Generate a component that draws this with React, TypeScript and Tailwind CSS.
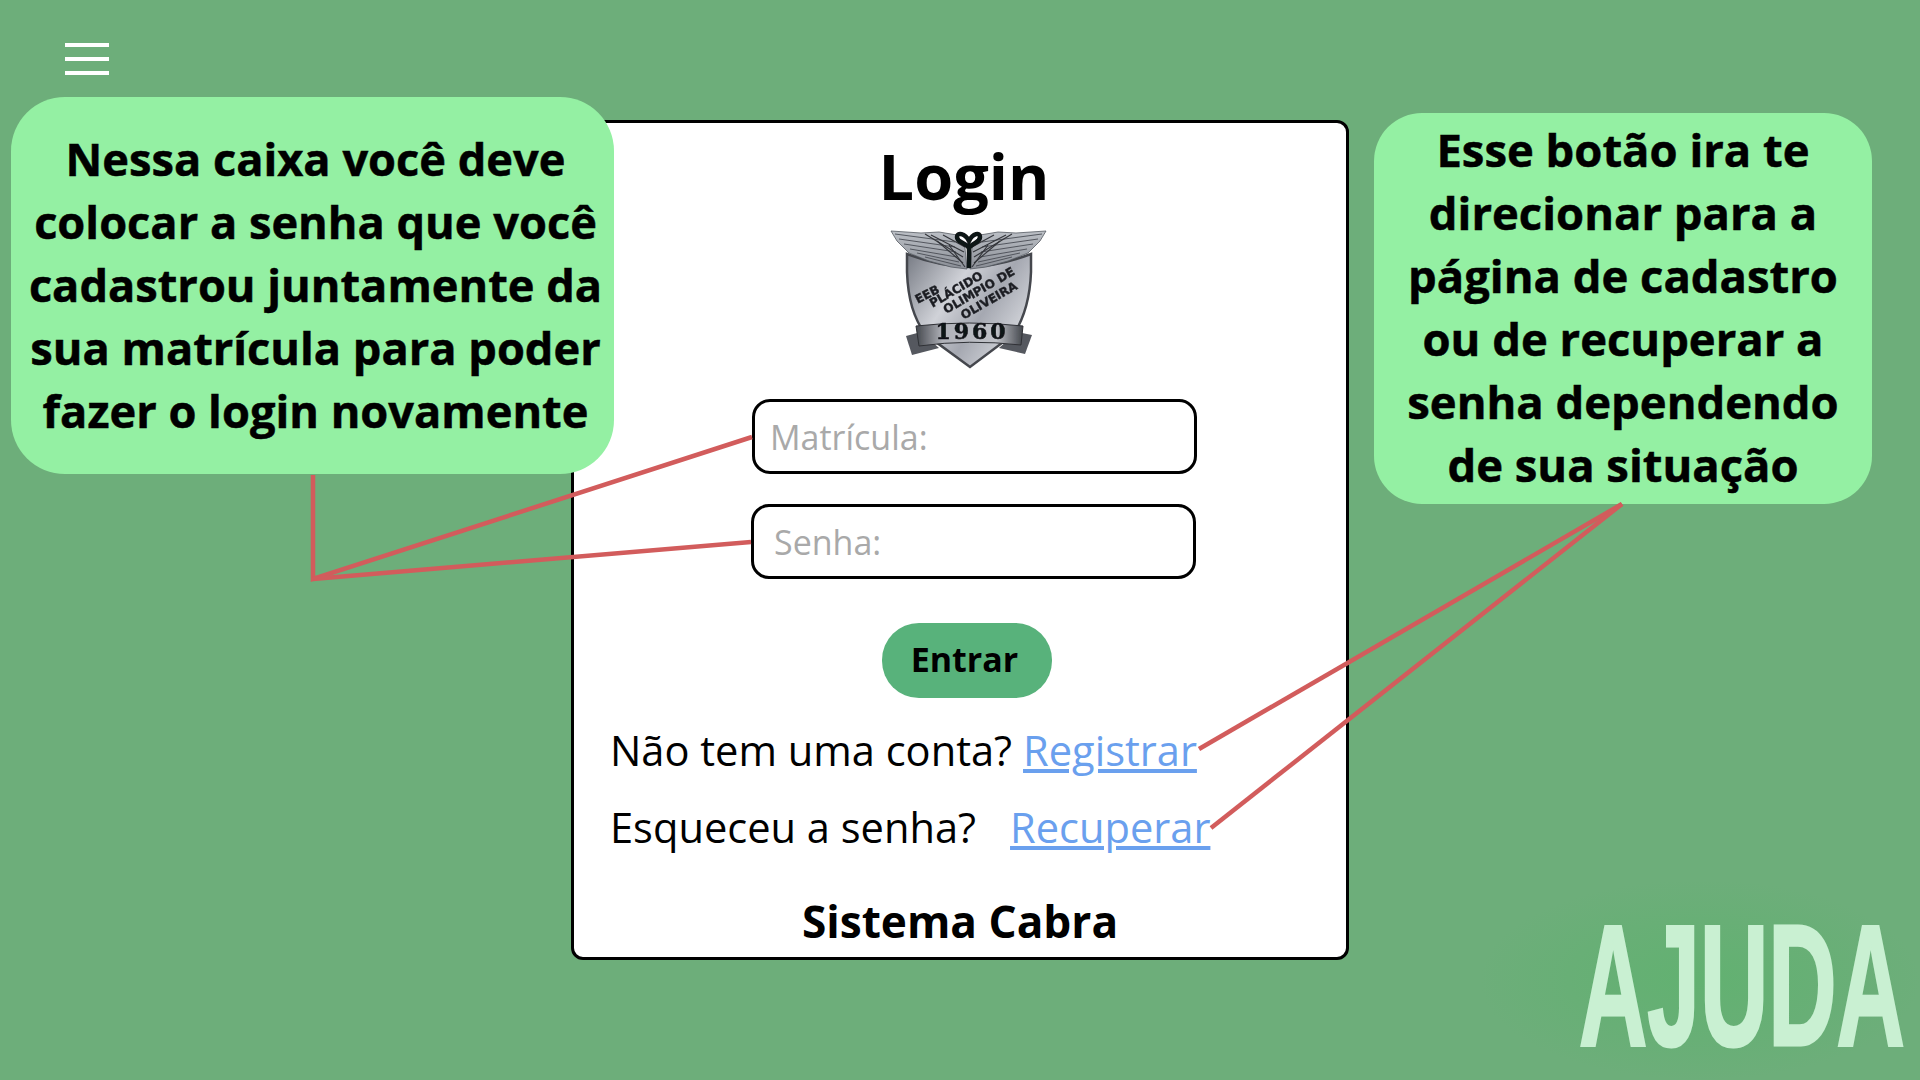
import React from "react";

const font = { fontFamily: '"Open Sans", "Noto Sans", sans-serif' };

// long outer feathers, then the darker layered ones near the body
const longFeathers = [
  "M36 24 L96 32",
  "M40 29 L96 37",
  "M45 34 L97 42",
  "M51 39 L98 47",
  "M58 43 L100 52",
  "M66 47 L102 56",
];
const innerFeathers = [
  "M66 24 L104 47",
  "M72 25 L105 42",
  "M78 31 L104 53",
  "M84 25 L106 37",
  "M90 35 L106 57",
];

const Wing = () => (
  <g>
    <path d="M32 21 L62 23 L80 22 L98 25 L106 38 L108 59 L92 57 L70 51 L50 43 L38 31 Z" fill="url(#wing)" stroke="#565a62" strokeWidth="0.8" />
    {longFeathers.map((d) => (
      <path key={d} d={d} stroke="#4a4d55" strokeWidth="0.9" fill="none" />
    ))}
    {innerFeathers.map((d) => (
      <path key={d} d={d} stroke="#33353a" strokeWidth="1.1" fill="none" />
    ))}
  </g>
);

const Crest = () => (
  <svg viewBox="30 19 160 140" className="w-[160px] h-[142px] block" aria-label="Brasão EEB Plácido de Olimpio de Oliveira 1960">
    <defs>
      <linearGradient id="shield" x1="0" y1="0" x2="1" y2="0.6">
        <stop offset="0" stopColor="#777b84" />
        <stop offset="0.42" stopColor="#d0d2d8" />
        <stop offset="0.68" stopColor="#a5a8b1" />
        <stop offset="1" stopColor="#d6d8dd" />
      </linearGradient>
      <linearGradient id="wing" x1="0" y1="0" x2="0" y2="1">
        <stop offset="0" stopColor="#bcc0c6" />
        <stop offset="1" stopColor="#8a8e96" />
      </linearGradient>
      <linearGradient id="banner" x1="0" y1="0" x2="1" y2="0">
        <stop offset="0" stopColor="#45484e" />
        <stop offset="0.25" stopColor="#b0b2b9" />
        <stop offset="0.75" stopColor="#c0c2c8" />
        <stop offset="1" stopColor="#43464c" />
      </linearGradient>
      <filter id="soft">
        <feGaussianBlur stdDeviation="0.4" />
      </filter>
    </defs>
    <g filter="url(#soft)">
      <path d="M48 44 Q80 56 110 57 Q140 56 172 44 L172 62 C171 90 165 108 155 124 L111 157 L66 124 C55 108 49 90 48 62 Z" fill="url(#shield)" stroke="#44474d" strokeWidth="2.5" />
      <Wing />
      <g transform="translate(219 0) scale(-1 1)">
        <Wing />
      </g>
      <path d="M47 126 L62 122 L80 138 L53 145 Z" fill="#55585f" />
      <path d="M173 125 L158 122 L140 138 L166 144 Z" fill="#55585f" />
      <path d="M57 116 Q110 110 164 116 L162 135 Q110 129 60 136 Z" fill="url(#banner)" stroke="#2f3136" strokeWidth="1" />
      <path d="M110 58 L110 38 C105 31 98 33 98 27 C98 22 106 23 110 31 C114 23 121 22 121 27 C121 33 115 31 110 38" fill="none" stroke="#111214" strokeWidth="4.5" />
      <g fill="#1d1f24" stroke="#1d1f24" strokeWidth="0.4" fontWeight="700" fontSize="12" textAnchor="middle" style={{ fontFamily: '"DejaVu Sans", sans-serif' }}>
        <text transform="translate(70 88) rotate(-27)">EEB</text>
        <text transform="translate(99 83) rotate(-30)">PLÁCIDO</text>
        <text transform="translate(122 84) rotate(-30)">OLIMPIO DE</text>
        <text transform="translate(132 94) rotate(-30)">OLIVEIRA</text>
      </g>
      <text x="113" y="129" textAnchor="middle" fill="#111216" stroke="#111216" strokeWidth="0.6" fontWeight="700" fontSize="22" letterSpacing="3" style={{ fontFamily: '"DejaVu Serif", serif' }}>
        1960
      </text>
    </g>
  </svg>
);

export default function App() {
  return (
    <div className="relative w-[1920px] h-[1080px] overflow-hidden bg-[#6dae7a] text-black" style={font}>
      <div className="flex items-start">
        {/* Left column */}
        <div className="relative z-10 w-[571px] shrink-0 pt-[43px]">
          <div className="ml-[65px] flex w-[44px] flex-col gap-[10px]">
            <span className="h-[4px] bg-white" />
            <span className="h-[4px] bg-white" />
            <span className="h-[4px] bg-white" />
          </div>
          <div className="ml-[11px] mt-[22px] w-[603px] h-[377px] rounded-[54px] bg-[#94f0a3] pt-[30px] pl-[6px] text-center text-[45.2px] font-bold leading-[63px] [-webkit-text-stroke:0.5px_black]">
            Nessa caixa você deve
            <br />
            colocar a senha que você
            <br />
            cadastrou juntamente da
            <br />
            sua matrícula para poder
            <br />
            fazer o login novamente
          </div>
        </div>

        {/* Login card */}
        <div className="mt-[120px] w-[778px] h-[840px] shrink-0 rounded-[12px] border-[3px] border-black bg-white flex flex-col">
          <h1 className="mt-[13px] ml-[8px] text-center text-[63px] font-bold leading-[80px]">Login</h1>
          <div className="mt-[12px] ml-[315px]">
            <Crest />
          </div>
          <input
            readOnly
            placeholder="Matrícula:"
            className="mt-[29px] ml-[178px] w-[445px] h-[75px] rounded-[18px] border-[3px] border-black bg-white pl-[15px] text-[34px] placeholder:text-[#a9a9a9] outline-none"
          />
          <input
            readOnly
            placeholder="Senha:"
            className="mt-[30px] ml-[177px] w-[445px] h-[75px] rounded-[18px] border-[3px] border-black bg-white pl-[20px] text-[34px] placeholder:text-[#a9a9a9] outline-none"
          />
          <button className="mt-[44px] ml-[308px] w-[170px] h-[75px] rounded-[37px] bg-[#58b27b] pr-[5px] pb-[2px] text-[34px] font-bold">Entrar</button>
          <div className="mt-[24px] ml-[36px] flex text-[41.6px] leading-[57px]">
            <span>Não tem uma conta?</span>
            <a className="ml-[11px] text-[#6aa0ee] underline">Registrar</a>
          </div>
          <div className="mt-[20px] ml-[36px] flex text-[41.6px] leading-[57px]">
            <span>Esqueceu a senha?</span>
            <a className="ml-[34px] text-[#6aa0ee] underline">Recuperar</a>
          </div>
          <p className="mt-[36px] text-center text-[44.2px] font-bold leading-[58px]">Sistema Cabra</p>
        </div>

        {/* Right column */}
        <div className="ml-[25px] mt-[113px] w-[498px] h-[391px] shrink-0 rounded-[48px] bg-[#94f0a3] pt-[5px] text-center text-[45.4px] font-bold leading-[63px] [-webkit-text-stroke:0.5px_black]">
          Esse botão ira te
          <br />
          direcionar para a
          <br />
          página de cadastro
          <br />
          ou de recuperar a
          <br />
          senha dependendo
          <br />
          de sua situação
        </div>
      </div>

      {/* AJUDA stamp */}
      <div className="absolute right-0 bottom-0 w-[440px] h-[200px] bg-[radial-gradient(closest-side,#62b171_0%,#68af76_60%,#6dae7a_100%)]">
        <span
          className="absolute left-[99px] top-[19px] origin-left scale-x-[0.55] text-[172px] font-bold leading-[172px] text-[#c9f0d2] [-webkit-text-stroke:3px_#c9f0d2]"
          style={{ fontFamily: '"Liberation Sans", sans-serif' }}
        >
          AJUDA
        </span>
      </div>

      {/* Connector lines */}
      <svg className="absolute inset-0 z-20 pointer-events-none" width="1920" height="1080" fill="none" stroke="#d25c5c" strokeWidth="4.5">
        <path d="M313 475 L313 579 L752 437" />
        <path d="M313 579 L751 542" />
        <path d="M1622 504 L1199 749" />
        <path d="M1622 504 L1211 828" />
      </svg>
    </div>
  );
}
